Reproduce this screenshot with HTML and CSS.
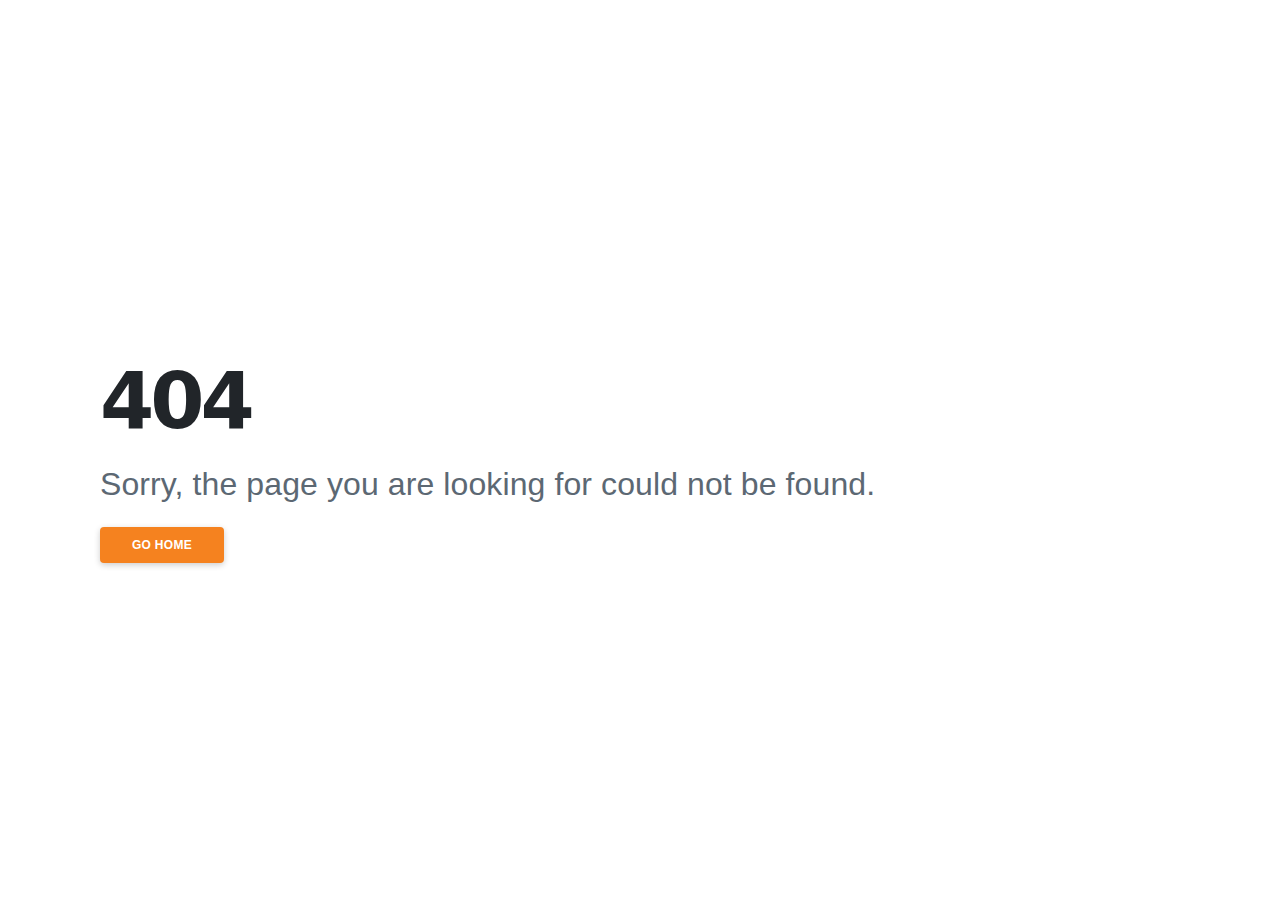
FILE: index.html
```html
<!DOCTYPE html>
<html lang="en">
<head>
    <meta charset="utf-8" />
    <title>Page not found</title>
    <link rel="stylesheet" href="styles.css">
</head>
<body>
<!-- error page -->
<div class="page">
    <div class="content">
        <h1 class="code">404</h1>
        <p class="msg">Sorry, the page you are looking for could not be found.</p>
        <a class="btn" href="#">Go Home</a>
    </div>
</div>
</body>
</html>
```

FILE: styles.css
```css
/* reset */
body,div,h1,p{margin:0; padding:0;}
body{font-family:"Liberation Sans", Arial, sans-serif; background:#fff; color:#212529;}

/* layout */
.page{min-height:900px; display:flex; align-items:center; padding:0 100px; box-sizing:border-box;}
.content{padding-top:25px; display:flex; flex-direction:column; align-items:flex-start;}

.code{font-family:"DejaVu Sans", sans-serif; font-size:78px; line-height:1; font-weight:700; color:#212529; letter-spacing:-4px;}
.msg{margin-top:25px; font-size:32px; line-height:1.2; color:#5c6873; letter-spacing:0.1px;}

.btn{display:block; margin-top:24px; width:124px; height:36px; line-height:36px; text-align:center; background:#f5821f; color:#fff; font-size:12px; font-weight:700; letter-spacing:0.3px; text-transform:uppercase; text-decoration:none; border-radius:4px; box-shadow:0 2px 6px rgba(0,0,0,.2);}
```
